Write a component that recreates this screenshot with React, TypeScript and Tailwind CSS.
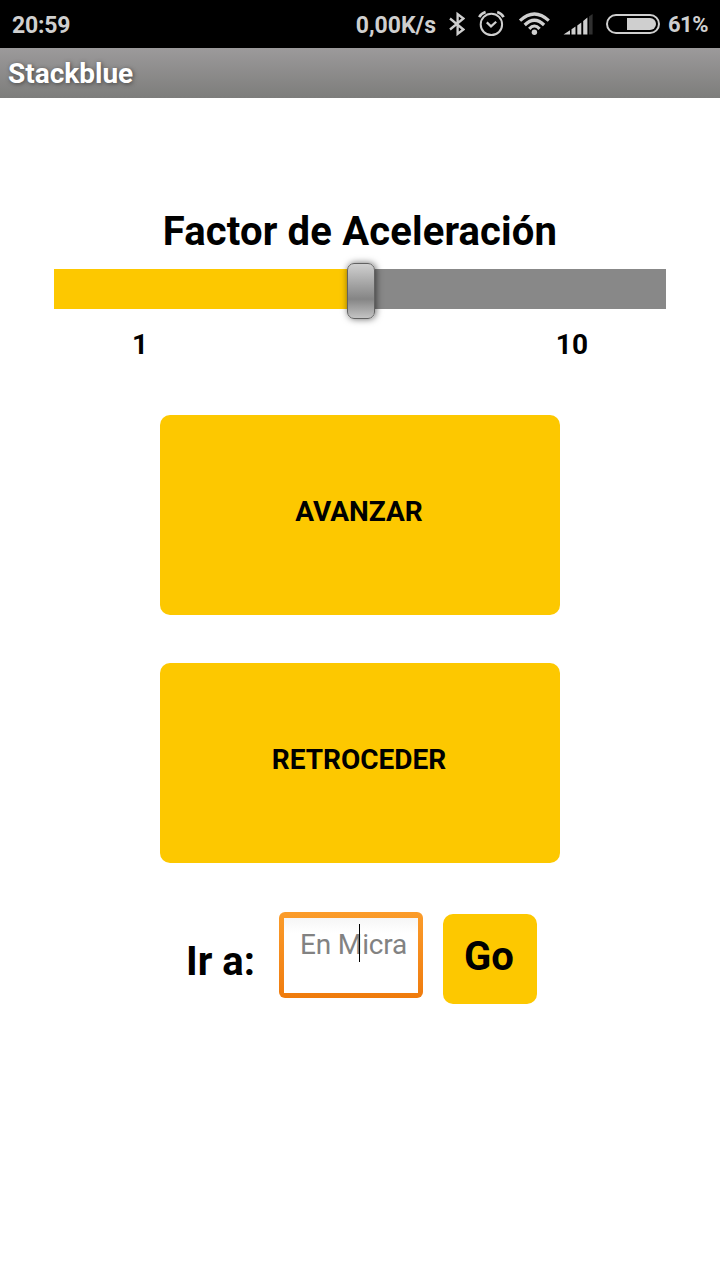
function BluetoothIcon() {
  return (
    <svg className="ml-[13px] h-[26px] w-[16px]" viewBox="0 0 16 26" fill="none" stroke="#cfcfcf" strokeWidth="2.3">
      <path d="M1 7.5 14.4 18.5 8.6 23V3L14.4 7.5 1 18.5" />
    </svg>
  );
}

function AlarmIcon() {
  return (
    <svg className="ml-[12px] h-[28px] w-[28px]" viewBox="0 0 28 28" fill="none" stroke="#cfcfcf" strokeWidth="2">
      <circle cx="14.4" cy="14.4" r="10.7" />
      <path d="M9.8 12.4 14 16.4 19.2 11.8" strokeWidth="2.2" />
      <path d="M2.2 7.2Q4.2 3.4 8.6 2M26.6 7.2Q24.6 3.4 20.2 2" strokeWidth="2.6" />
    </svg>
  );
}

function WifiIcon() {
  return (
    <svg className="ml-[13px] h-[26px] w-[32px]" viewBox="0 0 32 26" fill="none" stroke="#cfcfcf" strokeWidth="3.2">
      <path d="M2 9.6Q16.4-3.6 30.8 9.6" />
      <path d="M6.7 14Q16.4 4.4 26.1 14" />
      <path d="M11.2 17.8Q16.4 12.2 21.6 17.8" />
      <circle cx="16.4" cy="21.2" r="2.7" fill="#cfcfcf" stroke="none" />
    </svg>
  );
}

function SignalIcon() {
  return (
    <svg className="ml-[13px] h-[22px] w-[31px]" viewBox="0 0 31 22" fill="#cfcfcf">
      <path d="M.5 21.5 7 17.2V21.5ZM8.5 16.3 12.5 13.5V21.5H8.5ZM14.3 12.4 18.3 9.4V21.5H14.3ZM20.2 8 24.4 4.6V21.5H20.2Z" />
      <path d="M26 3.6 29.6 1V21.5H26Z" fill="#303030" />
    </svg>
  );
}

function BatteryIcon() {
  return (
    <svg className="ml-[12px] h-[20px] w-[54px]" viewBox="0 0 54 20">
      <rect x="1" y="1" width="52" height="18" rx="9" fill="none" stroke="#cfcfcf" strokeWidth="2" />
      <path d="M21 4H44A6 6 0 0 1 44 16H21Z" fill="#cfcfcf" />
    </svg>
  );
}

function StatusBar() {
  return (
    <header className="flex h-12 items-center bg-black pr-[12px] pl-[12px] text-[23px] font-bold text-[#cfcfcf]">
      <span className="mt-[4px] tracking-[-0.2px]">20:59</span>
      <span className="mt-[4px] ml-auto">0,00K/s</span>
      <BluetoothIcon />
      <AlarmIcon />
      <WifiIcon />
      <SignalIcon />
      <BatteryIcon />
      <span className="mt-px ml-[8px] text-[22px] tracking-[-0.5px]">61%</span>
    </header>
  );
}

export default function App() {
  return (
    <div className="flex h-[1280px] w-[720px] flex-col overflow-hidden bg-white font-['Roboto',sans-serif] text-black">
      <StatusBar />
      <div className="flex h-[50px] items-center bg-linear-to-b from-[#9c9a9b] to-[#7d7d7b] px-2 pt-[2px] text-[28px] font-bold text-white [text-shadow:1px_1px_4px_#444]">
        Stackblue
      </div>
      <main className="flex flex-col items-center pt-[110px]">
        <h1 className="flex h-[47px] items-center text-[40px] leading-none font-bold tracking-[0.15px] whitespace-nowrap">Factor de Aceleración</h1>
        <div className="mt-[8px] flex h-[56px] w-[612px] items-center">
          <div className="-mt-[4px] h-[40px] w-[293px] bg-[#fdc800]" />
          <div className="z-10 h-[56px] w-[28px] shrink-0 rounded-[7px] border-[1.5px] border-[#626262] bg-linear-to-b from-[#d0d0d0] via-[#858585] via-65% to-[#c4c4c4] shadow-[1px_0_7px_rgba(0,0,0,0.6)]" />
          <div className="-mt-[4px] h-[40px] w-[291px] bg-[#888888]" />
        </div>
        <div className="mt-[9px] flex h-[33px] w-[612px] items-center justify-between pr-[78px] pl-[78px] text-[28px] font-bold">
          <span>1</span>
          <span>10</span>
        </div>
        <button className="mt-[54px] flex h-[200px] w-[400px] items-center justify-center rounded-[10px] bg-[#fdc800] pr-[2px] pb-[7px] text-[28px] font-bold">
          AVANZAR
        </button>
        <button className="mt-12 flex h-[200px] w-[400px] items-center justify-center rounded-[10px] bg-[#fdc800] pr-[2px] pb-[7px] text-[28px] font-bold">
          RETROCEDER
        </button>
        <div className="mt-[49px] ml-[2px] flex w-[352px] items-start">
          <span className="mt-[26px] w-[94px] pl-px text-[40px] leading-[47px] font-bold whitespace-nowrap">Ir a:</span>
          <div className="h-[86px] w-[144px] rounded-[6px] bg-linear-to-b from-[#fb9c2a] to-[#ef7b0c] p-[5px] pt-[6px]">
            <div className="relative h-full bg-linear-to-b from-[#f6f6f6] to-white to-20% pt-[10px] pl-[16px] text-[28px] leading-[33px] tracking-[-0.15px] whitespace-nowrap text-[#828282]">
              En Micra
              <i className="absolute top-[6px] left-[75px] h-[38px] w-px bg-black" />
            </div>
          </div>
          <button className="mt-[2px] ml-[20px] flex h-[90px] w-[94px] items-center justify-center rounded-[10px] bg-[#fdc800] pr-[2px] pb-[4px] text-[40px] font-bold">
            Go
          </button>
        </div>
      </main>
    </div>
  );
}
